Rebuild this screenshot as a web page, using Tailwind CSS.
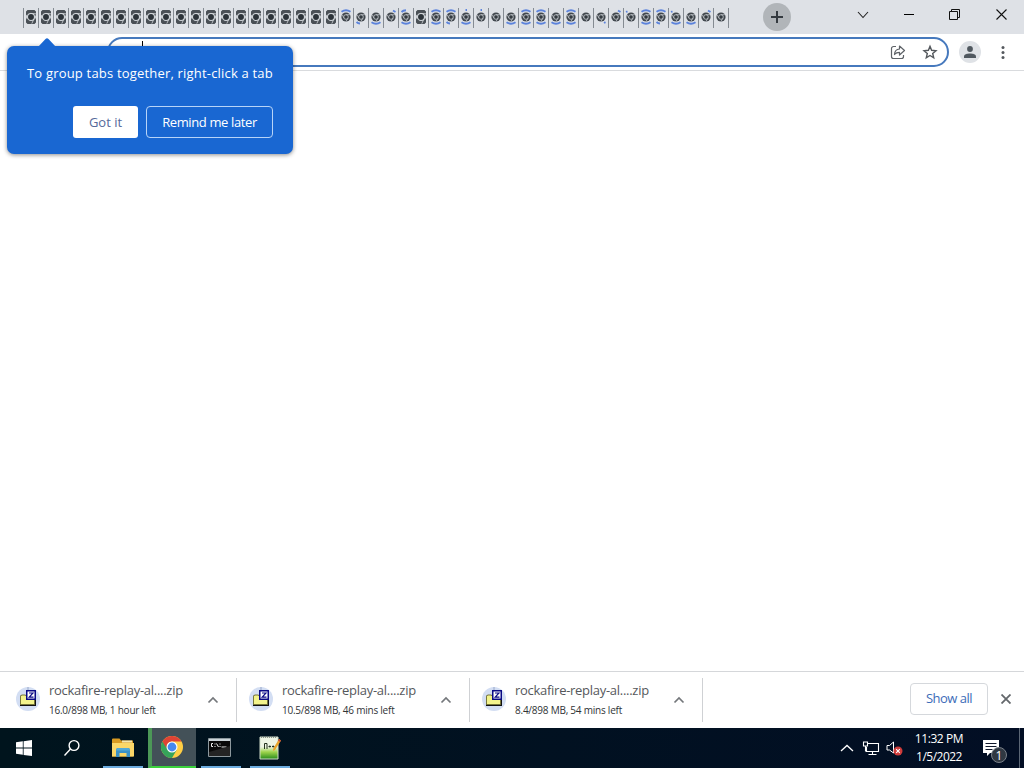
<!DOCTYPE html>
<html lang="en">
<head>
    <meta charset="UTF-8">
    <meta name="viewport" content="width=device-width, initial-scale=1.0">
    <title>New Tab</title>
    <script src="https://cdn.jsdelivr.net/npm/@tailwindcss/browser@4"></script>
</head>
<body class="w-[1024px] h-[768px] overflow-hidden flex flex-col bg-white font-['Open_Sans','Noto_Sans',sans-serif] text-[#3c4043]">

    <!-- shared icons -->
    <svg class="hidden">
        <symbol id="tabLoaded" viewBox="0 0 12 16">
            <path d="M2.500 1h7l1.500 1.500v3L10 8l1 2.500v3L9.500 15h-7L1 13.500v-3L2 8 1 5.500v-3z" fill="#4a5056"/>
            <circle cx="6" cy="8" r="3.500" fill="#2c3339" stroke="#d3d7db" stroke-width="1.100"/>
            <path d="M5.500 4.400 11 4.800M9 9.800 6.800 14.600M2.900 9.600 1 6" stroke="#d3d7db" stroke-width=".8" fill="none"/>
        </symbol>
        <symbol id="tabLoading" viewBox="0 0 12 16">
            <circle cx="6" cy="8" r="4.600" fill="#42484e"/>
            <circle cx="6" cy="8" r="2.300" fill="#343b41" stroke="#c9cdd2" stroke-width=".8"/>
            <path d="M6 5.700h4M8 9.200 6 12.300M4 9.200 2.200 5.800" stroke="#c9cdd2" stroke-width=".7"/>
        </symbol>
        <symbol id="zip" viewBox="0 0 26 26">
            <circle cx="13" cy="14" r="12" fill="#d3def3"/>
            <path d="M13 2v4" stroke="#9aa9cb"/>
            <path d="M5 12l1-2h5v1h10v10H5z" fill="#111"/>
            <path d="M5.500 11.500 6.500 10h4l1 1.500h8v8h-14z" fill="#f3f38c" stroke="#77773a"/>
            <path d="M11.750 5.750h8.500v8.500h-8.500z" fill="#fff" stroke="#0a0a85" stroke-width="1.500"/>
            <path d="M14 8h4l-3.800 4.200h4.300" fill="none" stroke="#0a0a85" stroke-width="1.200"/>
        </symbol>
        <symbol id="chevronUp" viewBox="0 0 12 8">
            <path d="M1.500 6.500 6 2l4.500 4.500" fill="none" stroke="#74777b" stroke-width="1.700"/>
        </symbol>
    </svg>

    <!-- tab strip -->
    <div class="h-[34px] shrink-0 bg-[#dee1e6] flex items-start">
        <div id="tabStrip" class="flex ml-[23px] mt-2 h-5 w-[706px] border-r border-[#858b92]"></div>
        <button class="ml-[34px] mt-[3px] size-7 rounded-full bg-[#b1b5b9] flex items-center justify-center">
            <svg class="size-3" viewBox="0 0 12 12"><path d="M6 0v12M0 6h12" stroke="#343a40" stroke-width="2"/></svg>
        </button>
        <div class="ml-auto flex h-[29px] items-center">
            <div class="w-[46px] flex justify-center"><svg class="w-3 h-2" viewBox="0 0 12 8"><path d="M1 1l5 5.500L11 1" fill="none" stroke="#222" stroke-width="1.100"/></svg></div>
            <div class="w-[46px] flex justify-center"><div class="w-2.5 h-px bg-black"></div></div>
            <div class="w-[46px] pr-px flex justify-center"><svg class="size-[11px]" viewBox="0 0 11 11"><path d="M.5 2.500h8v8h-8zM2.500 2.500v-2h8v8h-2" fill="none" stroke="#111"/></svg></div>
            <div class="w-[46px] flex justify-center"><svg class="size-[11px]" viewBox="0 0 11 11"><path d="M.5.5l10 10M10.500.5l-10 10" stroke="#111" stroke-width="1.100"/></svg></div>
        </div>
    </div>

    <!-- toolbar -->
    <div class="relative h-[37px] shrink-0 border-b border-[#d9dbde] flex pt-[3px]">
        <div class="ml-[107px] w-[842px] h-[30px] rounded-full border-2 border-[#4679bd] flex items-center pr-[9px]">
            <div class="ml-[33px] w-px h-4 mb-1.5 bg-black"></div>
            <svg class="ml-auto size-4" viewBox="0 0 16 16" fill="none" stroke="#5f6368" stroke-width="1.200">
                <path d="M6 2.500H3.500a2 2 0 0 0-2 2v8a2 2 0 0 0 2 2h8a2 2 0 0 0 2-2V11"/>
                <path d="M4.500 10.500C4.700 7 6.500 5.200 9.500 5V2l5 4.500-5 4.500V8.300C7.300 8.300 5.700 9 4.500 10.500z" stroke-linejoin="round"/>
            </svg>
            <svg class="ml-4 size-4" viewBox="0 0 16 16" fill="none" stroke="#54585d" stroke-width="1.400">
                <path d="M8 2.300 9.600 6.300 14 6.700 10.700 9.500 11.700 13.800 8 11.500 4.300 13.800 5.300 9.500 2 6.700 6.400 6.300z"/>
            </svg>
        </div>
        <div class="ml-[10px] mt-1 size-[22px] rounded-full bg-[#dfe2e6] flex items-center justify-center">
            <svg class="size-3.5" viewBox="0 0 14 14" fill="#50585f"><circle cx="7" cy="4" r="2.900"/><path d="M1 13v-1.600C1 9.300 4.200 8.500 7 8.500s6 .8 6 2.900V13z"/></svg>
        </div>
        <svg class="ml-[19.500px] mt-2 w-1 h-[15px]" viewBox="0 0 4 15" fill="#54585d"><circle cx="2" cy="2.500" r="1.500"/><circle cx="2" cy="7.500" r="1.500"/><circle cx="2" cy="12.500" r="1.500"/></svg>

        <!-- tab group promo -->
        <div class="absolute left-[7px] top-3 w-[286px] h-[108px] rounded-[7px] bg-[#1967d2] shadow-[0_1px_4px_rgba(0,0,0,0.45)] text-white text-[13px]">
            <svg class="absolute left-[31px] -top-2 w-[18px] h-[9px]" viewBox="0 0 18 9"><path d="M0 9 7.500 1Q9-.5 10.500 1L18 9z" fill="#1967d2"/></svg>
            <p class="pl-5 pt-[18px] leading-[18px] whitespace-nowrap tracking-[0.19px]">To group tabs together, right-click a tab</p>
            <div class="flex justify-end gap-2 pr-5 mt-6">
                <button class="w-[65px] h-8 pt-0.5 rounded-[3px] bg-white text-[#56699a]">Got it</button>
                <button class="w-[127px] h-8 pt-0.5 rounded-[4px] border border-[#b8d4f8] whitespace-nowrap tracking-[-0.38px]">Remind me later</button>
            </div>
        </div>
    </div>

    <main class="flex-1"></main>

    <!-- download shelf -->
    <div class="h-[57px] shrink-0 border-t border-[#d5d7da] flex items-center">
        <div class="w-[237px] h-11 border-r border-[#cfd1d4] flex items-center">
            <svg class="ml-[15px] size-[26px] mb-1"><use href="#zip"/></svg>
            <div class="ml-2 w-[150px] whitespace-nowrap">
                <p class="text-[13px] leading-[18px] tracking-[-0.28px] text-[#55585c]">rockafire-replay-al....zip</p>
                <p class="text-[10px] leading-4 mt-[3px] mb-px tracking-[-0.23px] text-[#303336]">16.0/898 MB, 1 hour left</p>
            </div>
            <svg class="ml-2 w-3 h-2"><use href="#chevronUp"/></svg>
        </div>
        <div class="w-[233px] h-11 border-r border-[#cfd1d4] flex items-center">
            <svg class="ml-[11px] size-[26px] mb-1"><use href="#zip"/></svg>
            <div class="ml-2 w-[150px] whitespace-nowrap">
                <p class="text-[13px] leading-[18px] tracking-[-0.28px] text-[#55585c]">rockafire-replay-al....zip</p>
                <p class="text-[10px] leading-4 mt-[3px] mb-px tracking-[-0.23px] text-[#303336]">10.5/898 MB, 46 mins left</p>
            </div>
            <svg class="ml-2 w-3 h-2"><use href="#chevronUp"/></svg>
        </div>
        <div class="w-[233px] h-11 border-r border-[#cfd1d4] flex items-center">
            <svg class="ml-[11px] size-[26px] mb-1"><use href="#zip"/></svg>
            <div class="ml-2 w-[150px] whitespace-nowrap">
                <p class="text-[13px] leading-[18px] tracking-[-0.28px] text-[#55585c]">rockafire-replay-al....zip</p>
                <p class="text-[10px] leading-4 mt-[3px] mb-px tracking-[-0.23px] text-[#303336]">8.4/898 MB, 54 mins left</p>
            </div>
            <svg class="ml-2 w-3 h-2"><use href="#chevronUp"/></svg>
        </div>
        <button class="ml-auto w-[78px] h-8 mb-0.5 rounded-[4px] border border-[#d5d8dc] text-[13px] tracking-[-0.5px] text-[#3c6cb8]">Show all</button>
        <svg class="ml-[13px] mr-[13px] mb-0.5 size-2.5" viewBox="0 0 10 10"><path d="M.5.5l9 9M9.500.5l-9 9" stroke="#63676b" stroke-width="1.800"/></svg>
    </div>

    <!-- taskbar -->
    <div class="h-10 shrink-0 bg-[#00131e] bg-linear-to-r from-[#00141d] to-[#020e24] flex">
        <div class="w-12 flex items-center justify-center">
            <svg class="size-4" viewBox="0 0 16 16" fill="#fff"><path d="M0 2.300 6.800 1.300V7.600H0zM7.600 1.200 16 0v7.600H7.600zM0 8.400h6.800v6.400L0 13.800zM7.600 8.400H16V16L7.600 14.900z"/></svg>
        </div>
        <div class="w-12 flex items-center justify-center">
            <svg class="size-[18px]" viewBox="0 0 18 18" fill="none" stroke="#fff" stroke-width="1.400"><circle cx="11" cy="6.500" r="4.900"/><path d="M7.500 10 1.500 16.500"/></svg>
        </div>
        <div class="w-[52px] pl-[7px] pr-[5px] flex flex-col items-center">
            <svg class="mt-2.5 w-[22px] h-5" viewBox="0 0 22 20">
                <path d="M0 1.500Q0 .5 1 .5h6.500l1.500 2h12v16H0z" fill="#d99b22"/>
                <path d="M0 5h22v13.500H0z" fill="#fbd768"/>
                <path d="M10 2.500h10v2H10z" fill="#f4e6b0"/>
                <path d="M4 19v-7q0-2 2-2h10q2 0 2 2v7h-3.500v-4h-7v4z" fill="#3b92c7"/>
                <path d="M4 12.500q0-2.500 2-2.500h10q2 0 2 2.500z" fill="#52a9d8"/>
            </svg>
            <div class="mt-auto w-10 h-0.5 bg-[#6cacdf]"></div>
        </div>
        <div class="w-12 pr-1 bg-[#435158] border-l-4 border-b-2 border-l-[#4c9857] border-b-[#3bd23c] flex items-center justify-center">
            <svg class="size-[22px]" viewBox="0 0 22 22">
                <circle cx="11" cy="11" r="11" fill="#ffce44"/>
                <path d="M1.470 5.500A11 11 0 0 0 11 22l4.800-8.300L11 11z" fill="#36a45a"/>
                <path d="M1.470 5.500A11 11 0 0 1 20.530 5.500H11A5.500 5.500 0 0 0 5.900 13z" fill="#de4335"/>
                <circle cx="11" cy="11" r="5.500" fill="#fff"/><circle cx="11" cy="11" r="4.400" fill="#4688ee"/>
            </svg>
        </div>
        <div class="w-12 pl-0.5 flex flex-col items-center">
            <svg class="mt-2.5 mr-[3px] w-[23px] h-[19px]" viewBox="0 0 23 19">
                <path d="M.5.5h22v18H.5z" fill="#090909" stroke="#8d989d"/><path d="M1 1h21v2H1z" fill="#cbd4d8"/>
                <path d="M5 5.500H3.500v3H5M7 5.500v1M7 8v1M8.500 5.500l2 3.500M12 5.500v1M12 8v1M13.500 9h5" stroke="#eee" fill="none"/>
                <path d="M1 18V14L22 8v10z" fill="#242424"/>
            </svg>
            <div class="mt-auto w-10 h-0.5 bg-[#6cacdf]"></div>
        </div>
        <div class="w-[52px] pr-px flex flex-col items-center">
            <svg class="mt-2 w-[22px] h-6" viewBox="0 0 22 24">
                <defs><linearGradient id="npp" x2="0" y2="1"><stop offset=".45" stop-color="#eef4e4"/><stop offset=".68" stop-color="#9fd44c"/><stop offset="1" stop-color="#278b1b"/></linearGradient></defs>
                <path d="M1 1h18v22H1z" fill="url(#npp)" stroke="#cfdbc9"/>
                <path d="M2 1.500h16" stroke="#8b9288" stroke-dasharray="1 1"/>
                <path d="M5.500 13V7.500h2.500V13M9.500 10.500h2.500M10.800 9.500v2M13 10.500h2.500M14.200 9.500v2" stroke="#25321f" fill="none"/>
                <path d="M20 3l2 1.500-6 9.500-2 1 .3-2.500z" fill="#eba52b"/><path d="M20 3l2 1.500-1 1.500-2-1.500z" fill="#c54b3a"/>
            </svg>
            <div class="mt-auto w-10 h-0.5 bg-[#6cacdf]"></div>
        </div>

        <div class="ml-auto flex items-center text-white">
            <svg class="w-3.5 h-2" viewBox="0 0 14 8"><path d="M1 7l6-5.500L13 7" fill="none" stroke="#fff" stroke-width="1.300"/></svg>
            <svg class="ml-2 w-[18px] h-[15px]" viewBox="0 0 18 15" fill="none" stroke="#fff" stroke-width="1.100"><path d="M6 2.500h10.500v8H4.500V6M10.500 10.500v3M6.500 13.500h8"/><path d="M1.500 1h4v4h-4zM3.500 5v5.500"/></svg>
            <svg class="ml-1.5 w-[17px] h-4" viewBox="0 0 17 16"><path d="M1 5.500h2.500L7.500 2v11L3.500 10H1z" fill="none" stroke="#fff"/><circle cx="12" cy="11" r="4.500" fill="#cf3c3b"/><path d="M10.200 9.200l3.600 3.600M13.800 9.200l-3.600 3.600" stroke="#fff" stroke-width="1.100"/></svg>
            <div class="ml-2.5 w-[52px] text-center text-[12px] leading-[18px] whitespace-nowrap flex flex-col items-center">
                <span class="tracking-[-0.42px]">11:32 PM</span>
                <span class="tracking-[-0.5px]">1/5/2022</span>
            </div>
            <svg class="ml-[17px] mt-1.5 w-[26px] h-[26px]" viewBox="0 0 26 26">
                <path d="M1 2h16v13H8l-3 3v-3H1z" fill="#fff"/><path d="M3.500 5.500h11M3.500 8.500h11M3.500 11.500h7" stroke="#10182b"/>
                <circle cx="17" cy="17" r="7.500" fill="#303842" stroke="#7a818a"/>
                <text x="17" y="21.500" font-size="12" fill="#fff" text-anchor="middle">1</text>
            </svg>
            <div class="ml-[11px] h-10 w-[5px] border-l border-[#5b6675]"></div>
        </div>
    </div>

    <script>
        // Spinner pieces still visible in each squeezed tab:
        // t/b = full arc top/bottom, q/e = top left/right, z/c = bottom left/right,
        // m = dot on top, d = dot top left, x = loaded
        const tabs = [
            ...Array(21).fill('x'),
            't', 'z', 'b', 'e', 'qb', 'x', 'tb', 'tz', 'bm', 'm', '', 'b', 'tb',
            'tb', 'b', 'tb', '', 'c', 'e', 'd', 'tb', 'tz', 'db', 'b', 'e', ''
        ];

        const arcs = {
            t: 'M1.500 2.800Q6-.200 10.500 2.800',
            b: 'M1.500 13.200Q6 16.200 10.500 13.200',
            q: 'M1.500 3Q3 1.500 6 1.300',
            e: 'M8 1.500 10.500 3',
            z: 'M1.500 13Q3 14.500 5 14.500',
            c: 'M9 14 10.500 13.200',
            m: 'M5.500 1h1.500',
            d: 'M1 3 2.500 2.300'
        };

        document.getElementById('tabStrip').innerHTML = tabs.map(state => `
            <div class="w-[15px] h-5 border-l border-[#858b92] pl-px pt-px">
                <svg class="w-3 h-4" viewBox="0 0 12 16">
                    <use href="${state === 'x' ? '#tabLoaded' : '#tabLoading'}"/>
                    ${state === 'x' ? '' : [...state].map(s => `<path d="${arcs[s]}" fill="none" stroke="#5c83dc" stroke-width="1.900"/>`).join('')}
                </svg>
            </div>
        `).join('');
    </script>
</body>
</html>
